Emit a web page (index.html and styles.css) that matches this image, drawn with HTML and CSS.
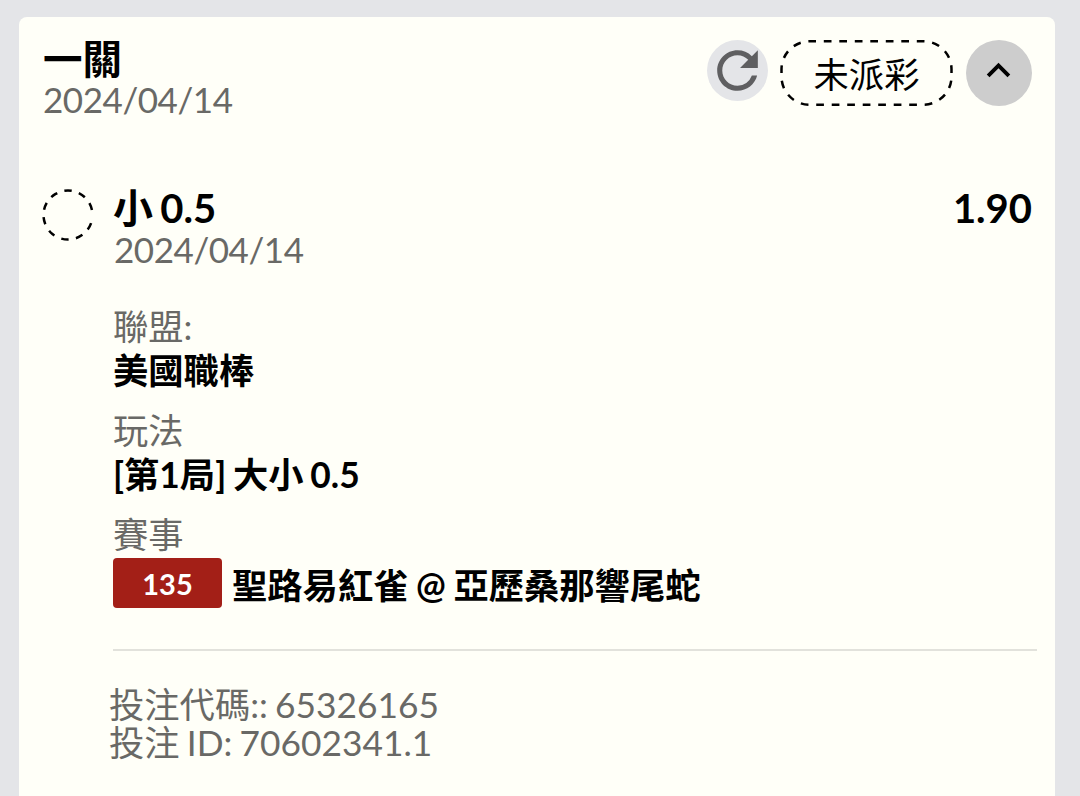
FILE: index.html
```html
<!DOCTYPE html>
<html lang="zh-Hant">
<head>
  <meta charset="UTF-8">
  <meta name="viewport" content="width=device-width, initial-scale=1.0">
  <title>未派彩</title>
  <link rel="stylesheet" href="styles.css">
</head>
<body>
  <main class="card">
    <header class="card-header">
      <div class="card-heading">
        <h1>一關</h1>
        <div class="date">2024/04/14</div>
      </div>
      <div class="actions">
        <button class="refresh" aria-label="重新整理">
          <svg width="61" height="61" viewBox="0 0 24 24">
            <path fill="#5f5f61" d="M17.650 6.350A7.958 7.958 0 0 0 12 4c-4.420 0-7.990 3.580-7.990 8s3.570 8 7.990 8c3.730 0 6.840-2.550 7.730-6h-2.080A5.990 5.990 0 0 1 12 18c-3.310 0-6-2.690-6-6s2.690-6 6-6c1.660 0 3.140.690 4.220 1.780L13 11h7V4l-2.350 2.350z"/>
          </svg>
        </button>
        <div class="status">
          <svg class="status-border" width="173" height="66" viewBox="0 0 173 66">
            <rect x="1.500" y="1.300" width="170" height="63.400" rx="28" fill="none" stroke="#000" stroke-width="2.500" stroke-dasharray="7.700 7.800" stroke-dashoffset="1.200"/>
          </svg>
          <span>未派彩</span>
        </div>
        <button class="toggle" aria-label="收合">
          <svg width="47" height="47" viewBox="0 0 24 24">
            <path d="M12 8l-6 6 1.410 1.410L12 10.830l4.590 4.580L18 14z"/>
          </svg>
        </button>
      </div>
    </header>

    <section class="bet">
      <svg class="mark" width="52" height="52" viewBox="0 0 52 52">
        <path d="M49.100 34.200 A24.500 24.500 0 1 1 50.100 21.700" fill="none" stroke="#000" stroke-width="2.500" stroke-dasharray="7.300 7.450"/>
      </svg>
      <div class="bet-body">
        <div class="pick">
          <span>小 0.5</span>
          <span>1.90</span>
        </div>
        <div class="date">2024/04/14</div>

        <dl class="info">
          <dt>聯盟:</dt>
          <dd>美國職棒</dd>
          <dt>玩法</dt>
          <dd>[第1局] 大小 0.5</dd>
          <dt>賽事</dt>
          <dd class="match"><span class="badge">135</span><span class="teams">聖路易紅雀 @ 亞歷桑那響尾蛇</span></dd>
        </dl>
      </div>
    </section>

    <footer class="codes">
      <div>投注代碼:: 65326165</div>
      <div>投注 ID: 70602341.1</div>
    </footer>
  </main>
</body>
</html>
```

FILE: styles.css
```css
* {
  box-sizing: border-box;
}

body {
  margin: 0;
  padding: 17px 25px 0 19px;
  height: 796px;
  overflow: hidden;
  background-color: #e4e5e8;
  color: #000;
  font-family: Lato, "Noto Sans CJK TC", sans-serif;
  font-size: 35.3px;
  word-spacing: -1.8px;
}

.card {
  height: 800px;
  padding: 23px 18px 0 23px;
  background-color: #fffff8;
  border-radius: 8px;
}

.card-header {
  display: flex;
  justify-content: space-between;
  height: 146px;
  padding-right: 5px;
}

h1 {
  margin: 0;
  padding-left: 1px;
  font-size: 39.5px;
  font-weight: 600;
  line-height: 37px;
}

.card-heading .date {
  margin-top: 1px;
}

.date {
  padding-left: 1px;
  font-size: 35px;
  line-height: 42px;
  letter-spacing: -0.45px;
  color: #696966;
}

.actions {
  display: flex;
  align-items: flex-start;
  gap: 13px;
}

button {
  display: block;
  padding: 0;
  border: 0;
  border-radius: 50%;
  cursor: pointer;
}

svg {
  display: block;
}

.refresh {
  width: 61px;
  height: 61px;
  margin-right: -1px;
  background-color: #e4e5e8;
}

.toggle {
  width: 66px;
  height: 66px;
  padding: 0 0 5px 9px;
  background-color: #cdcdcd;
}

.status {
  position: relative;
  width: 173px;
  height: 66px;
  line-height: 69px;
  text-align: center;
}

.status-border {
  position: absolute;
  inset: 0;
}

.bet {
  display: flex;
  gap: 19px;
}

.mark {
  flex: none;
  margin-top: 3px;
}

.bet-body {
  flex: 1;
  padding-bottom: 41px;
  border-bottom: 2px solid #e2e2dc;
}

.pick {
  display: flex;
  justify-content: space-between;
  height: 42px;
  padding: 0 5px 0 0;
  font-size: 40px;
  font-weight: 700;
  line-height: 44px;
  word-spacing: -2.5px;
}

.info {
  margin: 35px 0 0;
}

dt {
  line-height: 44px;
  color: #696966;
}

dd {
  margin: 0 0 16px;
  font-weight: 700;
  line-height: 43px;
  padding-bottom: 1px;
}

.match {
  display: flex;
  align-items: center;
  gap: 10px;
  margin: 1px 0 0;
  padding: 0;
  word-spacing: -1px;
}

.teams {
  padding-top: 4px;
}

.badge {
  width: 109px;
  height: 50px;
  border-radius: 4px;
  background-color: #a31f17;
  color: #fff;
  font-size: 29px;
  line-height: 52px;
  text-align: center;
}

.codes {
  margin-top: 35px;
  padding-left: 67px;
  line-height: 38px;
  color: #696966;
}
```
